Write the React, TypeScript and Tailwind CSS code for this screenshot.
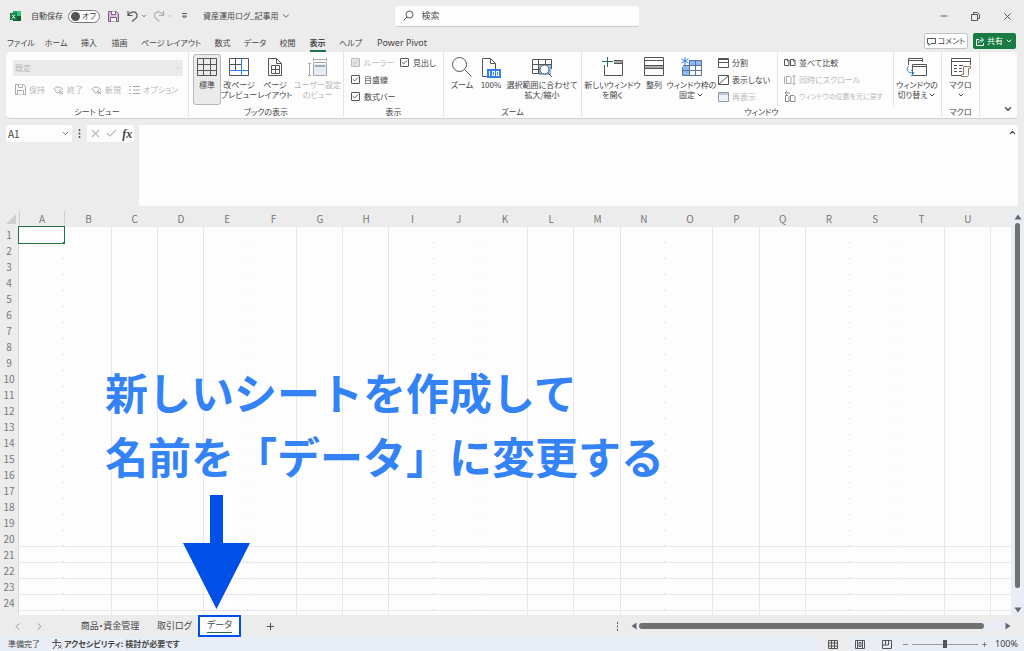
import React, { useState } from "react";
import { ChevronDown, ChevronUp, ChevronLeft, ChevronRight, X, Minus, Plus, Check } from "lucide-react";
import clsx from "clsx";

const GRAY = "#555555";
const BLUE = "#2f80ed";

type IconProps = { children: React.ReactNode; w?: number; h?: number; color?: string; className?: string };

const Svg: React.FC<IconProps> = ({ children, w = 20, h = 20, color = GRAY, className }) => (
  <svg width={w} height={h} viewBox={`0 0 ${w} ${h}`} fill="none" stroke={color} strokeWidth="1" className={clsx("shrink-0", className)} aria-hidden="true">
    {children}
  </svg>
);

const GridIcon = () => (
  <Svg><path d="M.5 1.5h19v17H.5zM6.5 1v18M13.5 1v18M0 7.5h20M0 13.5h20" /></Svg>
);

const PageBreakIcon = () => (
  <Svg>
    <path d="M12.5 1.5H.5v12M6.5 1v12M0 7.5h12M12.5 1.5h7v17H.5v-5" />
    <path d="M12.5 1v18M0 13.5h20" stroke={BLUE} />
  </Svg>
);

const PageLayoutIcon = () => (
  <Svg>
    <path d="M3.500 1.500h8l5 5v12h-13zM11.500 1.500v5h5" />
    <path d="M6.500 8.500h8v8h-8zM10.500 8v8M6 12.500h8" />
  </Svg>
);

const CustomViewIcon = () => (
  <Svg color="#a8a8a8">
    <path d="M6 7h12v11H6z" fill="#e6ecf7" stroke="none" />
    <path d="M5.500 5.500h13v13h-13zM5 2.500h14M5.500 1v3M18.500 1v3M1.500 6v12M0 6.500h3M0 18.500h3" />
    <path d="M7 8h10v2H7z" fill="#a8a8a8" stroke="none" />
  </Svg>
);

const ZoomIcon = () => (
  <Svg><circle cx="7.500" cy="7.500" r="7" /><path d="m12.500 12.500 7 7" /></Svg>
);

const HundredIcon = () => (
  <Svg h={21}>
    <path d="M6 19.500H1.500v-18h8l5 5V12M9.500 1.500v5h5" />
    <path d="M6 12h14v9H6z" fill={BLUE} stroke="none" />
    <path d="M8.500 14v5" stroke="#fff" />
    <rect x="11.500" y="14.500" width="2" height="4" stroke="#fff" />
    <rect x="15.500" y="14.500" width="2" height="4" stroke="#fff" />
  </Svg>
);

const ZoomSelectionIcon = () => (
  <Svg h={21}>
    <path d="M7 7h12v11H7z" fill="#8ab8f8" stroke="none" />
    <path d="M8 16.500H.5v-14h19V12M6.500 2v14M13.500 2v5M0 7.500h20M0 12.500h8" />
    <circle cx="12.500" cy="12.500" r="4.500" fill="#fff" />
    <path d="m16 16 4 4" />
  </Svg>
);

const NewWindowIcon = () => (
  <Svg w={22}>
    <path d="M2.500 8v10.500h18v-15H12M12 6.500h8M12 5h8" />
    <path d="M5.500 0v10M0 4.500h11" stroke="#217346" />
  </Svg>
);

const ArrangeIcon = () => (
  <Svg>
    <path d="M1 9h18v3H1z" fill="#aaa" stroke="none" />
    <path d="M.5.5h19v8H.5zM.5 11.500h19v7H.5zM0 3.500h20M.5 8v4M19.500 8v4" />
  </Svg>
);

const FreezeIcon = () => (
  <Svg w={22}>
    <path d="M8 3h13v6H8zM2 9h6v10H2z" fill="#8ab8f8" stroke="none" />
    <path d="M8 3.500h12.500v15h-19V10M8.500 3v15M14.500 3v15M2 8.500h18M2 13.500h18" stroke="#5c7290" />
    <path d="M4 0v8M.5 2l7 4M7.500 2l-7 4" stroke={BLUE} />
  </Svg>
);

const SwitchIcon = () => (
  <Svg w={22}>
    <path d="M2.500 8V1.500h14V5M2 3.500h14M6.500 7.500h14v11h-14zM6 9.500h14" />
    <path d="M2.500 9c-3 4-1 7 5 7M5 13l3 3-3 3" stroke={BLUE} />
  </Svg>
);

const MacroIcon = () => (
  <Svg>
    <path d="M10 18.500H.5v-17h19V8M0 4.500h19M3 8.500h3M8 8.500h4M3 11.500h3M8 11.500h3M3 14.500h3M8 14.500h3" />
    <path d="M12.500 9.500h7v2h-2v6c0 2-1 2-2 2h-5v-2h2z" fill="#fdf6ef" stroke="#8a7d70" />
  </Svg>
);

const SaveIcon = ({ color = "#a8a8a8", fill = "none" }: { color?: string; fill?: string }) => (
  <Svg w={11} h={11} color={color}>
    <path d="M.5.5h8l2 2v8H.5z" fill={fill} /><path d="M3.500.5v3h4v-3M2.500 10.500v-4h6v4" fill="#fff" />
  </Svg>
);

const EyeIcon = () => (
  <Svg w={11} h={10} color="#a8a8a8">
    <path d="M.5 5c2-4 7-4 9.500 0M3 4.500a2.300 2.300 0 1 0 4 0M6 6l4 3M10 6 7 9.500" />
  </Svg>
);

const ListIcon = () => (
  <Svg w={11} h={10} color="#a8a8a8"><path d="M0 1.500h2M4 1.500h7M0 5h2M4 5h7M0 8.500h2M4 8.500h7" /></Svg>
);

const SplitIcon = () => <Svg w={11} h={10}><path d="M.5.5h10v9H.5zM0 4.500h11M0 1.500h11" /></Svg>;
const HideIcon = () => <Svg w={11} h={10}><path d="M.5.5h10v9H.5zM1 9l9-8" /></Svg>;
const UnhideIcon = () => <Svg w={11} h={10} color="#8c98ae"><path d="M.5.5h10v9H.5z" fill="#eef2fa" /><path d="M0 2h11" /></Svg>;

const PagesIcon = ({ color = GRAY }: { color?: string }) => (
  <Svg w={12} h={9} color={color}><path d="M.5 1.500H4l1 1v5H.5zM6.500 1.500H10l1 1v5H6.500zM3.500 1v2H5M9.500 1v2H11" /></Svg>
);

const SyncScrollIcon = () => (
  <Svg w={12} h={10} color="#a8a8a8"><path d="M.5 1.500v7M2.500 1.500H6l1 1v6H2.500zM10 0v10M8.500 2 10 .5 11.500 2M8.500 8 10 9.500 11.500 8" /></Svg>
);

const ResetIcon = () => (
  <Svg w={12} h={11} color="#8c8c8c"><path d="M1.500 4.500H4l1 1v5H1.500zM6.500 4.500H10l1 1v5H6.500zM1 2h5M3 0 1 2l2 2" /></Svg>
);

const BigButton: React.FC<{ icon: React.ReactNode; lines: string[]; className: string; arrow?: boolean; active?: boolean; disabled?: boolean }> = ({ icon, lines, className, arrow, active, disabled }) => (
  <button
    disabled={disabled}
    className={clsx(
      "mt-[2px] flex h-[51px] shrink-0 flex-col items-center rounded-[3px] text-[8px] leading-[10px] whitespace-nowrap",
      active ? "border border-[#b8b8b8] bg-[#ebebeb] pt-[2px]" : "pt-[3px]",
      disabled && "text-[#b8b8b8]",
      className
    )}
  >
    <span className="flex h-[23px] items-start">{icon}</span>
    {lines.map((line, i) => (
      <span key={line} className="flex items-center">
        {line}
        {arrow && lines.length > 1 && i === lines.length - 1 && <ChevronDown size={8} strokeWidth={3} className="ml-px" />}
      </span>
    ))}
    {arrow && lines.length === 1 && <ChevronDown size={8} strokeWidth={3} className="mt-px" />}
  </button>
);

const SmallButton: React.FC<{ icon: React.ReactNode; label: string; disabled?: boolean; long?: boolean }> = ({ icon, label, disabled, long }) => (
  <button disabled={disabled} className={clsx("flex h-[17px] items-center gap-[3px] whitespace-nowrap", long ? "text-[7px]" : "text-[8px]", disabled && "text-[#b8b8b8]")}>
    {icon}
    {label}
  </button>
);

const CheckItem: React.FC<{ label: string; disabled?: boolean }> = ({ label, disabled }) => {
  const [on, setOn] = useState(true);
  return (
    <label className={clsx("flex h-[17px] items-center gap-1 text-[8px] whitespace-nowrap", disabled && "text-[#b8b8b8]")}>
      <span className="relative flex">
        <input
          type="checkbox"
          checked={on}
          disabled={disabled}
          onChange={() => setOn(!on)}
          className="size-[9px] appearance-none rounded-[1px] border border-[#555] disabled:border-[#bbb] disabled:bg-[#e4e4e4]"
        />
        {on && <Check size={7} strokeWidth={3} className="pointer-events-none absolute top-px left-px" />}
      </span>
      {label}
    </label>
  );
};

const Group: React.FC<{ label: string; className: string; children: React.ReactNode }> = ({ label, className, children }) => (
  <section className={clsx("mb-px flex shrink-0 flex-col border-r border-[#e4e4e4]", className)}>
    <div className="flex h-[54px] shrink-0">{children}</div>
    <div className="text-center text-[8px] leading-[12px]">{label}</div>
  </section>
);

const tabs = ["ファイル", "ホーム", "挿入", "描画", "ページ レイアウト", "数式", "データ", "校閲", "表示", "ヘルプ", "Power Pivot"];
const tabWidths = ["w-[36px]", "w-[34px]", "w-[32px]", "w-[29px]", "w-[74px]", "w-[29px]", "w-[36px]", "w-[29px]", "w-[31px]", "w-[35px]", "w-[68px]"];

const TitleBar = () => (
  <header className="flex h-8 items-center text-[8px]">
    <div className="flex flex-1 items-center whitespace-nowrap">
      <Svg w={12} h={12} className="ml-[10px]">
        <path d="M3 1h8v10H3z" fill="#21a366" stroke="none" />
        <path d="M7 1h4v5H7z" fill="#33c481" stroke="none" />
        <path d="M3 6h8v5H3z" fill="#185c37" stroke="none" />
        <path d="M0 3h7v7H0z" fill="#107c41" stroke="none" />
        <path d="m2 4.500 3 4m0-4-3 4" stroke="#fff" />
      </Svg>
      <span className="ml-[9px]">自動保存</span>
      <button role="switch" aria-checked="false" aria-label="自動保存" className="ml-[5px] flex h-[13px] w-8 items-center justify-between rounded-full border border-[#777] bg-white px-[2px]">
        <span className="size-[9px] rounded-full bg-[#555]" />
        <span className="pr-px">オフ</span>
      </button>
      <button aria-label="保存" className="ml-2"><SaveIcon color="#7d5a80" fill="#d9bfdc" /></button>
      <button aria-label="元に戻す" className="ml-2 flex items-center gap-[2px]">
        <Svg w={12} h={12}><path d="M1 1v4.500h4.500M1 5.500C3 2 7 1 9 3s1 5-1 6l-3 2.500" strokeWidth="1.200" /></Svg>
        <ChevronDown size={6} strokeWidth={3} />
      </button>
      <button aria-label="やり直し" disabled className="ml-[6px] flex items-center gap-[2px] text-[#b0b0b0]">
        <Svg w={12} h={12} color="#b0b0b0"><path d="M10.500 1v4.500H6M10.500 5.500C8.500 2 4.500 1 2.500 3s-1 5 1 6l3 2.500" strokeWidth="1.200" /></Svg>
        <ChevronDown size={6} strokeWidth={3} />
      </button>
      <button aria-label="クイック アクセス" className="ml-[8px]">
        <Svg w={7} h={6}><path d="M1 .5h5M1.500 3 3.500 5l2-2z" /></Svg>
      </button>
      <button className="ml-[15px] flex items-center gap-[2px]">資産運用ログ_記事用<ChevronDown size={10} /></button>
    </div>
    <label className="ml-[20px] flex h-[21px] w-[244px] items-center gap-2 rounded-[3px] border-b border-[#c8c8c8] bg-[#fdfdfd] px-2">
      <Svg w={11} h={11}><circle cx="6.500" cy="4.500" r="3.500" /><path d="M4 7 .5 10.500" /></Svg>
      <input type="search" aria-label="検索" placeholder="検索" className="w-full text-[9px] outline-none placeholder:text-[#555]" />
    </label>
    <div className="flex flex-1 items-center justify-end gap-[22px] pr-[11px]">
      <button aria-label="最小化"><Minus size={10} /></button>
      <button aria-label="元のサイズ"><Svg w={9} h={9}><path d="M.5 2.500h6v6h-6zM2.500 2V.500h4l2 2v4H7" /></Svg></button>
      <button aria-label="閉じる"><X size={11} /></button>
    </div>
  </header>
);

const RibbonTabs = () => (
  <nav className="flex h-5 items-end text-[8px]">
    <ul className="flex flex-1 pl-[3px]">
      {tabs.map((tab, i) => (
        <li key={tab} className={clsx("flex justify-center whitespace-nowrap", tabWidths[i])}>
          <a href="#" className={clsx("border-b-2 leading-[15px]", tab === "Power Pivot" && "font-['Noto_Sans'] text-[9px]", tab === "表示" ? "border-[#217346] font-bold" : "border-transparent")}>
            {tab}
          </a>
        </li>
      ))}
    </ul>
    <button className="mb-[3px] flex h-[16px] w-[44px] items-center justify-center gap-[2px] rounded-[2px] border border-[#c4c4c4] bg-white">
      <Svg w={9} h={9}><path d="M.5 1.500h8v5H4l-2 2v-2H.5z" /></Svg>コメント
    </button>
    <button className="mr-2 mb-[3px] ml-[5px] flex h-[16px] w-[43px] items-center justify-center gap-[2px] rounded-[2px] bg-[#187c42] text-white">
      <Svg w={9} h={9} color="#fff"><path d="M3 2.500H.5v6h7V6M2.500 6c0-2 2-3 4-3M5 .5 7.500 3 5 5.500" /></Svg>共有<ChevronDown size={8} strokeWidth={3} />
    </button>
  </nav>
);

const Ribbon = () => (
  <div className="mr-[7px] ml-[6px] flex h-[67px] overflow-hidden rounded-[4px] border-b border-[#d0d0d0] bg-[#fdfdfd]">
    <Group label="シート ビュー" className="w-[183px]">
      <div className="flex flex-col pt-2 pl-[7px]">
        <label className="relative flex items-center text-[#b8b8b8]">
          <select disabled aria-label="シート ビュー" className="h-4 w-[170px] appearance-none rounded-[2px] bg-[#eaeaea] pl-[2px] text-[8px]">
            <option>既定</option>
          </select>
          <ChevronDown size={7} className="pointer-events-none absolute right-px" />
        </label>
        <div className="mt-[5px] flex gap-[8px] pl-[2px]">
          <SmallButton disabled icon={<SaveIcon />} label="保持" />
          <SmallButton disabled icon={<EyeIcon />} label="終了" />
          <SmallButton disabled icon={<EyeIcon />} label="新規" />
          <SmallButton disabled icon={<ListIcon />} label="オプション" />
        </div>
      </div>
    </Group>
    <Group label="ブックの表示" className="w-[155px]">
      <BigButton active className="ml-1 w-7" icon={<GridIcon />} lines={["標準"]} />
      <BigButton className="w-[36px]" icon={<PageBreakIcon />} lines={["改ページ", "プレビュー"]} />
      <BigButton className="w-[36px]" icon={<PageLayoutIcon />} lines={["ページ", "レイアウト"]} />
      <BigButton disabled className="w-[49px]" icon={<CustomViewIcon />} lines={["ユーザー設定", "のビュー"]} />
    </Group>
    <Group label="表示" className="w-[100px]">
      <div className="grid grid-cols-[49px_auto] content-start pt-[2px] pl-[7px]">
        <CheckItem disabled label="ルーラー" />
        <CheckItem label="見出し" />
        <CheckItem label="目盛線" />
        <span />
        <CheckItem label="数式バー" />
      </div>
    </Group>
    <Group label="ズーム" className="w-[138px]">
      <BigButton className="ml-1 w-7" icon={<ZoomIcon />} lines={["ズーム"]} />
      <BigButton className="w-[30px]" icon={<HundredIcon />} lines={["100%"]} />
      <BigButton className="w-[72px]" icon={<ZoomSelectionIcon />} lines={["選択範囲に合わせて", "拡大/縮小"]} />
    </Group>
    <Group label="ウィンドウ" className="w-[360px]">
      <BigButton className="ml-[2px] w-[57px]" icon={<NewWindowIcon />} lines={["新しいウィンドウ", "を開く"]} />
      <BigButton className="w-[26px]" icon={<ArrangeIcon />} lines={["整列"]} />
      <BigButton arrow className="w-[49px]" icon={<FreezeIcon />} lines={["ウィンドウ枠の", "固定"]} />
      <div className="ml-[2px] flex w-[60px] flex-col border-r border-[#e4e4e4] pt-[2px]">
        <SmallButton icon={<SplitIcon />} label="分割" />
        <SmallButton icon={<HideIcon />} label="表示しない" />
        <SmallButton disabled icon={<UnhideIcon />} label="再表示" />
      </div>
      <div className="flex w-[116px] flex-col border-r border-[#e4e4e4] pt-[2px] pl-[6px]">
        <SmallButton icon={<PagesIcon />} label="並べて比較" />
        <SmallButton disabled icon={<SyncScrollIcon />} label="同時にスクロール" />
        <SmallButton disabled long icon={<ResetIcon />} label="ウィンドウの位置を元に戻す" />
      </div>
      <BigButton arrow className="w-[46px]" icon={<SwitchIcon />} lines={["ウィンドウの", "切り替え"]} />
    </Group>
    <Group label="マクロ" className="w-[38px]">
      <BigButton arrow className="w-full" icon={<MacroIcon />} lines={["マクロ"]} />
    </Group>
    <button aria-label="リボンを折りたたむ" className="mr-1 mb-1 ml-auto self-end"><ChevronDown size={10} strokeWidth={3} /></button>
  </div>
);

const FormulaBar = () => (
  <div className="mt-[6px] mr-[6px] ml-[6px] flex h-[81px] items-start">
    <label className="flex h-[17px] w-[66px] items-center justify-between rounded-[2px] bg-[#fdfdfd] px-[2px]">
      <input aria-label="名前ボックス" defaultValue="A1" className="w-10 text-[10px] outline-none" />
      <ChevronDown size={9} />
    </label>
    <Svg w={3} h={9} className="mx-[6px] mt-1"><path d="M1.500 0v2M1.500 3.500v2M1.500 7v2" strokeWidth="1.500" /></Svg>
    <div className="flex h-[17px] w-[47px] items-center justify-around rounded-[2px] bg-[#fdfdfd]">
      <button disabled aria-label="キャンセル" className="text-[#b8b8b8]"><X size={13} /></button>
      <button disabled aria-label="入力" className="text-[#b8b8b8]"><Check size={13} /></button>
      <button className="font-['Liberation_Serif'] text-[12px] leading-[12px] font-bold italic">fx</button>
    </div>
    <div className="ml-[5px] flex h-full flex-1 rounded-[2px] bg-[#fdfdfd]">
      <textarea aria-label="数式バー" className="h-full flex-1 resize-none outline-none" />
      <button aria-label="数式バーの折りたたみ" className="m-px mt-[3px] self-start"><ChevronUp size={9} strokeWidth={3} /></button>
    </div>
  </div>
);

const columns = "ABCDEFGHIJKLMNOPQRSTU".split("");
const faintColumns = ["A", "E", "I", "J", "N", "R", "S"];
const rows = Array.from({ length: 24 }, (_, i) => i + 1);

const Sheet = () => (
  <table className="w-full table-fixed border-separate border-spacing-0 bg-[#fdfdfd] text-[10px] text-[#777]">
    <colgroup>
      <col className="w-[19px]" />
      {columns.map((c) => <col key={c} />)}
      <col className="w-[20px]" />
    </colgroup>
    <thead>
      <tr className="h-4 bg-[#ececec]">
        <th className="p-0">
          <svg width="12" height="12" viewBox="0 0 12 12" className="ml-[5px]" aria-hidden="true"><path d="M11 1v10H1z" fill="#cfcfcf" /></svg>
        </th>
        {columns.map((c) => (
          <th key={c} scope="col" className={clsx("p-0 leading-4 font-normal", c === "A" && "border-x border-[#cfcfcf]")}>{c}</th>
        ))}
        <th className="p-0" />
      </tr>
    </thead>
    <tbody>
      {rows.map((r) => (
        <tr key={r} className="h-4">
          <th scope="row" className="h-4 border-r border-[#d8d8d8] bg-[#ececec] p-0 leading-4 font-normal">{r}</th>
          {columns.map((c) => (
            <td
              key={c}
              className={clsx(
                "relative h-4 border-r p-0",
                faintColumns.includes(c)
                  ? "border-r-transparent bg-[linear-gradient(#e3e5eb,#e3e5eb)] bg-[length:2px_1px] bg-right-bottom bg-no-repeat"
                  : "border-r-[#e6e8ee]",
                r > 19 && "border-b border-b-[#e6e8ee]"
              )}
            >
              {r === 1 && c === "A" && (
                <span className="absolute -inset-px block border border-[#217346]">
                  <span className="absolute -right-px -bottom-px size-[2px] bg-[#217346]" />
                </span>
              )}
            </td>
          ))}
          <td className={clsx("p-0", r > 19 && "border-b border-b-[#e6e8ee]")} />
        </tr>
      ))}
      <tr className="h-1">
        <th className="border-r border-[#d8d8d8] bg-[#ececec] p-0" />
        {columns.map((c) => <td key={c} className={clsx("border-r p-0", faintColumns.includes(c) ? "border-r-transparent" : "border-r-[#e6e8ee]")} />)}
        <td className="p-0" />
      </tr>
    </tbody>
  </table>
);

const Notes = () => (
  <>
    <p className="pointer-events-none absolute top-[148px] left-[105px] text-[43px] leading-[64px] font-bold whitespace-nowrap text-[#3383f7] [font-feature-settings:normal]">
      新しいシートを作成して
      <br />
      名前を「データ」に変更する
    </p>
    <svg width="67" height="115" viewBox="0 0 67 115" className="pointer-events-none absolute top-[284px] left-[183px]" aria-hidden="true">
      <path d="M27 0h13v48h27L33.500 114 0 48h27z" fill="#0050e8" />
    </svg>
  </>
);

const SheetTabs = () => (
  <div className="flex h-[22px] shrink-0 items-center text-[9px]">
    <button aria-label="前のシート" className="ml-[12px] text-[#888]"><ChevronLeft size={11} /></button>
    <button aria-label="次のシート" className="ml-[11px] text-[#888]"><ChevronRight size={11} /></button>
    <button className="ml-[34px] w-[62px] whitespace-nowrap">商品・資金管理</button>
    <button className="ml-4 w-[34px] whitespace-nowrap">取引ログ</button>
    <button className="ml-[7px] flex h-[22px] w-[43px] items-center justify-center border-2 border-[#0050e8] bg-[#fdfdfd]">
      <span className="mb-[2px] border-b border-[#217346] leading-[14px]">データ</span>
    </button>
    <button aria-label="新しいシート" className="ml-[24px]"><Plus size={11} /></button>
    <Svg w={3} h={9} className="ml-auto"><path d="M1.500 0v2M1.500 3.500v2M1.500 7v2" /></Svg>
    <div className="mr-[13px] ml-3 flex w-[380px] items-center bg-[#e9eef6]">
      <svg width="6" height="8" viewBox="0 0 6 8" aria-hidden="true"><path d="M5.500.5v7L.5 4z" fill="#666" /></svg>
      <div className="mr-[21px] ml-[2px] h-[6px] flex-1 rounded-full bg-[#707070]" />
      <svg width="6" height="8" viewBox="0 0 6 8" aria-hidden="true"><path d="M.5.5v7l5-3.500z" fill="#666" /></svg>
    </div>
  </div>
);

const StatusBar = () => (
  <footer className="flex h-[14px] shrink-0 items-center bg-[#e9eef6] text-[8px]">
    <span className="ml-2">準備完了</span>
    <Svg w={10} h={10} className="ml-3">
      <circle cx="4" cy="1.500" r="1" /><path d="M0 3.500h9M4 4v2l-3 4M4 6l1 1M6 6l3.500 3.500M9.500 6 6 9.500" />
    </Svg>
    <span className="ml-[2px] font-bold">アクセシビリティ: 検討が必要です</span>
    <div className="ml-auto flex h-full items-center">
      <button aria-label="標準" className="flex h-full w-[27px] items-center justify-center bg-[#ececec]">
        <Svg w={10} h={9}><path d="M.5.5h9v8h-9zM3.500 0v9M6.500 0v9M0 3h10M0 6h10" /></Svg>
      </button>
      <button aria-label="ページ レイアウト" className="flex w-[27px] justify-center">
        <Svg w={10} h={9}><path d="M.5.5h9v8h-9zM2.500 1v8M7.500 1v8M4 2.500h2v4H4z" /></Svg>
      </button>
      <button aria-label="改ページ プレビュー" className="flex w-[27px] justify-center">
        <Svg w={10} h={9}><path d="M.5.5h9v8h-9zM3.500 0v5M6.500 0v5H1" /></Svg>
      </button>
      <button aria-label="縮小" className="ml-[2px]"><Minus size={7} /></button>
      <input
        type="range"
        aria-label="ズーム"
        defaultValue={50}
        className="mx-[3px] h-[9px] w-[66px] appearance-none bg-[linear-gradient(#999,#999)] bg-[length:100%_1px] bg-center bg-no-repeat [&::-webkit-slider-thumb]:h-[8px] [&::-webkit-slider-thumb]:w-1 [&::-webkit-slider-thumb]:appearance-none [&::-webkit-slider-thumb]:bg-[#555]"
      />
      <button aria-label="拡大" className="mr-[7px]"><Plus size={7} /></button>
      <span className="mr-[6px] font-['Noto_Sans'] text-[9px]">100%</span>
    </div>
  </footer>
);

const App: React.FC = () => {
  return (
    <div className="flex min-h-screen flex-col overflow-hidden bg-[#ececec] font-['Noto_Sans_CJK_JP',sans-serif] text-[#444] [font-feature-settings:'palt']">
      <TitleBar />
      <RibbonTabs />
      <Ribbon />
      <FormulaBar />
      <main className="relative mt-[5px] flex flex-1">
        <div className="min-w-0 flex-1">
          <Sheet />
        </div>
        <div className="flex w-[13px] flex-col items-center bg-[#e9eef6] pt-[3px] pb-[2px]">
          <svg width="8" height="6" viewBox="0 0 8 6" aria-hidden="true"><path d="M.5 5.500h7L4 .5z" fill="#666" /></svg>
          <div className="mt-[3px] mb-[19px] w-[5px] flex-1 rounded-full bg-[#707070]" />
          <svg width="8" height="6" viewBox="0 0 8 6" aria-hidden="true"><path d="M.5.5h7L4 5.500z" fill="#666" /></svg>
        </div>
        <Notes />
      </main>
      <SheetTabs />
      <StatusBar />
    </div>
  );
};

export default App;
